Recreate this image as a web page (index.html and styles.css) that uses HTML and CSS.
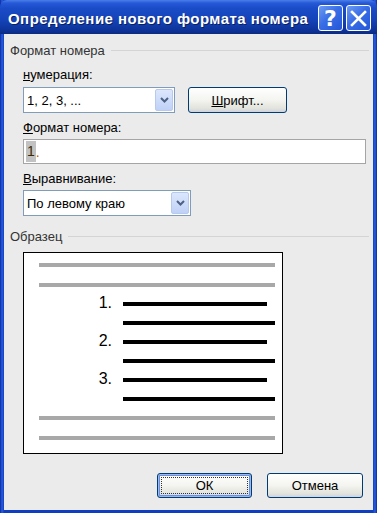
FILE: index.html
```html
<!DOCTYPE html>
<html lang="ru">
<head>
<meta charset="UTF-8">
<meta name="viewport" content="width=device-width, initial-scale=1.0">
<title>Определение нового формата номера</title>
<link rel="stylesheet" href="styles.css">
</head>

<body>

<div class="window">
    <div class="titlebar">
        <span class="title">Определение нового формата номера</span>
        <div class="caption-buttons">
            <span class="cap-btn help">?</span>
            <span class="cap-btn close">
                <svg width="17" height="17" viewBox="0 0 17 17">
                    <path d="M2 2 L15 15 M15 2 L2 15" stroke="#fff" stroke-width="2.6" stroke-linecap="square"/>
                </svg>
            </span>
        </div>
    </div>

    <div class="client">
        <div class="group-head"><span>Формат номера</span><i></i></div>

        <div class="label first"><u>н</u>умерация:</div>
        <div class="row">
            <div class="combo combo-num">
                <span class="combo-text">1, 2, 3, ...</span>
                <span class="drop"><svg width="9" height="6" viewBox="0 0 9 6"><path d="M1 1 L4.5 4.5 L8 1" fill="none" stroke="#4d6185" stroke-width="2"/></svg></span>
            </div>
            <button class="btn font-btn"><u>Ш</u>рифт...</button>
        </div>

        <div class="label"><u>Ф</u>ормат номера:</div>
        <div class="edit"><span class="sel">1</span><span class="dot">.</span></div>

        <div class="label"><u>В</u>ыравнивание:</div>
        <div class="combo combo-align">
            <span class="combo-text">По левому краю</span>
            <span class="drop"><svg width="9" height="6" viewBox="0 0 9 6"><path d="M1 1 L4.5 4.5 L8 1" fill="none" stroke="#4d6185" stroke-width="2"/></svg></span>
        </div>

        <div class="group-head sample-head"><span>Образец</span><i></i></div>

        <div class="sample">
            <div class="line gray"></div>
            <div class="line gray"></div>
            <div class="item"><span class="num">1.</span><span class="line black short"></span></div>
            <div class="item"><span class="num"></span><span class="line black"></span></div>
            <div class="item"><span class="num">2.</span><span class="line black short"></span></div>
            <div class="item"><span class="num"></span><span class="line black"></span></div>
            <div class="item"><span class="num">3.</span><span class="line black short"></span></div>
            <div class="item"><span class="num"></span><span class="line black"></span></div>
            <div class="line gray"></div>
            <div class="line gray"></div>
        </div>

        <div class="actions">
            <button class="btn default"><span class="focus">ОК</span></button>
            <button class="btn">Отмена</button>
        </div>
    </div>
</div>

</body>
</html>
```

FILE: styles.css
```css
body {
    margin: 0;
    font-family: "Liberation Sans", Arial, sans-serif;
    font-size: 13px;
    color: #000;
    background: #fff;
}

.window {
    width: 377px;
    height: 513px;
    display: flex;
    flex-direction: column;
    background: linear-gradient(to right, #0a2a9c 0, #2a5ee0 2px, #0f3fc0 4px, #0f3fc0 373px, #2a5ee0 375px, #0a2a9c 377px);
    overflow: hidden;
}

.titlebar {
    height: 34px;
    display: flex;
    align-items: center;
    justify-content: space-between;
    padding: 0 6px 0 8px;
    box-sizing: border-box;
    background: linear-gradient(to bottom, #4a7fe8 0, #2659d8 3px, #1b4cc8 8px, #1443b8 20px, #0d3296 31px, #0a2a80 34px);
    border-radius: 7px 7px 0 0;
}

.title {
    color: #fff;
    font-weight: bold;
    font-size: 15px;
    letter-spacing: 0.45px;
    text-shadow: 1px 1px 0 #0a1f60;
    margin-top: 2px;
}

.caption-buttons {
    display: flex;
    gap: 3px;
    margin-top: 2px;
}

.cap-btn {
    width: 25px;
    height: 26px;
    box-sizing: border-box;
    border: 1px solid #fff;
    border-radius: 3px;
    background: linear-gradient(135deg, #6d9cf2 0%, #3a6ee6 45%, #2456d6 100%);
    display: flex;
    align-items: center;
    justify-content: center;
    color: #fff;
}

.cap-btn.help {
    font-weight: bold;
    font-size: 22px;
    font-family: "DejaVu Sans", sans-serif;
}

.client {
    flex: 1;
    margin: 0 4px 3px 4px;
    background: #ebebeb;
    padding: 8px 0 12px 0;
    box-sizing: border-box;
    display: flex;
    flex-direction: column;
}

.group-head {
    display: flex;
    align-items: center;
    height: 16px;
    padding-left: 6px;
    padding-right: 4px;
    color: #333;
}

.group-head i {
    flex: 1;
    height: 1px;
    background: #d4d4d4;
    margin-left: 6px;
}

.label {
    height: 16px;
    line-height: 16px;
    margin: 7px 0 3px 19px;
}

.label.first {
    margin-top: 9px;
    margin-bottom: 4px;
}

.row {
    display: flex;
    align-items: center;
    gap: 13px;
    margin-left: 19px;
}

.combo {
    height: 26px;
    box-sizing: border-box;
    border: 1px solid #7f9db9;
    background: #fff;
    display: flex;
    align-items: center;
    justify-content: space-between;
    padding: 1px;
}

.combo-num {
    width: 152px;
}

.combo-align {
    width: 168px;
    margin-left: 19px;
}

.combo-text {
    padding-left: 2px;
    font-size: 13px;
}

.drop {
    width: 18px;
    height: 22px;
    box-sizing: border-box;
    border: 1px solid #b7c9ee;
    border-radius: 2px;
    background: linear-gradient(to bottom, #dce7fc, #bfd1f7);
    display: flex;
    align-items: center;
    justify-content: center;
}

.btn {
    font-family: "Liberation Sans", Arial, sans-serif;
    font-size: 13px;
    color: #000;
    height: 26px;
    box-sizing: border-box;
    border: 1px solid #003c74;
    border-radius: 3px;
    background: linear-gradient(to bottom, #ffffff 0%, #f4f4f0 50%, #e3e3dd 85%, #cdd3e0 100%);
    padding: 0;
}

.font-btn {
    width: 99px;
}

.edit {
    margin-left: 19px;
    width: 343px;
    height: 25px;
    box-sizing: border-box;
    border: 1px solid #a5a5a5;
    background: #fff;
    display: flex;
    align-items: center;
    padding-left: 2px;
    font-size: 14px;
}

.sel {
    background: #c2c2c2;
    color: #3a2a00;
    padding: 2px 1px 3px 1px;
}

.dot {
    color: #c06000;
}

.sample-head {
    margin-top: 12px;
}

.sample {
    margin: 8px 0 0 19px;
    width: 260px;
    height: 202px;
    box-sizing: border-box;
    border: 1px solid #000;
    background: #fff;
    padding: 10px 7px 0 15px;
    display: flex;
    flex-direction: column;
    gap: 15px;
}

.line {
    display: block;
    height: 4px;
}

.line.gray {
    background: #a8a8a8;
}

.sample .line.gray + .line.gray {
    margin-top: 1px;
}

.line.black {
    background: #000;
    flex: 1;
}

.line.short {
    margin-right: 8px;
}

.item {
    display: flex;
    height: 4px;
}

.num {
    width: 73px;
    margin-right: 11px;
    text-align: right;
    font-size: 16px;
    line-height: 2px;
    color: #000;
}

.actions {
    margin-top: auto;
    display: flex;
    justify-content: flex-end;
    gap: 15px;
    padding-right: 10px;
}

.actions .btn {
    width: 96px;
    height: 25px;
}

.btn.default {
    width: 95px;
    box-shadow: inset 0 0 0 1px #9cb9ef, inset 0 0 0 2px #6a8fe0;
    padding: 3px;
}

.focus {
    display: flex;
    align-items: center;
    justify-content: center;
    height: 100%;
    border: 1px dotted #333;
    box-sizing: border-box;
}
```
